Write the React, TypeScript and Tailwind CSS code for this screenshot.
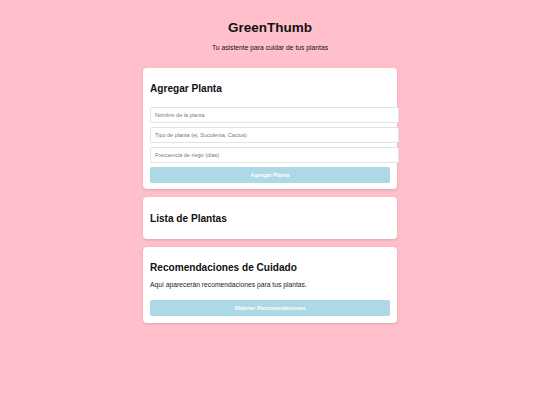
export default function App() {
  return (
    <div className="min-h-screen bg-[#ffc0cb] font-['Liberation_Sans',Arial,sans-serif] text-[#111] pt-[20px]">
      {/* encabezado */}
      <header className="text-center">
        <h1 className="text-[13.5px] leading-[16px] font-bold">GreenThumb</h1>
        <p className="mt-[8px] text-[6.75px] leading-[8px]">Tu asistente para cuidar de tus plantas</p>
      </header>

      <main className="mx-auto mt-[16px] flex w-[254px] flex-col gap-[8px]">
        {/* agregar planta */}
        <section className="rounded-[4px] bg-white px-[7px] pt-[7px] pb-[6px] shadow-[0_1px_3px_rgba(0,0,0,0.15)]">
          <h2 className="mt-[8px] text-[10.1px] leading-[12px] font-bold">Agregar Planta</h2>
          <div className="mt-[12px] flex flex-col gap-[4px]">
            <input
              placeholder="Nombre de la planta"
              className="h-[16px] w-[249px] rounded-[2px] border border-[#e3e3e3] bg-white px-[4px] text-[5.5px] outline-none placeholder:text-[#777]"
            />
            <input
              placeholder="Tipo de planta (ej. Suculenta, Cactus)"
              className="h-[16px] w-[249px] rounded-[2px] border border-[#e3e3e3] bg-white px-[4px] text-[5.5px] outline-none placeholder:text-[#777]"
            />
            <input
              placeholder="Frecuencia de riego (días)"
              className="h-[16px] w-[249px] rounded-[2px] border border-[#e3e3e3] bg-white px-[4px] text-[5.5px] outline-none placeholder:text-[#777]"
            />
            <button className="h-[16px] w-full rounded-[2px] bg-[#add8e6] text-[5.5px] font-bold text-white">
              Agregar Planta
            </button>
          </div>
        </section>

        {/* lista */}
        <section className="rounded-[4px] bg-white px-[7px] pt-[7px] pb-[7px] shadow-[0_1px_3px_rgba(0,0,0,0.15)]">
          <h2 className="mt-[9px] mb-[7px] text-[10.1px] leading-[12px] font-bold">Lista de Plantas</h2>
        </section>

        {/* recomendaciones */}
        <section className="rounded-[4px] bg-white px-[7px] pt-[7px] pb-[6px] shadow-[0_1px_3px_rgba(0,0,0,0.15)]">
          <h2 className="mt-[8px] text-[10.1px] leading-[12px] font-bold">Recomendaciones de Cuidado</h2>
          <p className="mt-[7px] text-[6.75px] leading-[8px] text-[#222]">
            Aquí aparecerán recomendaciones para tus plantas.
          </p>
          <button className="mt-[11px] h-[16px] w-full rounded-[2px] bg-[#add8e6] text-[5.5px] font-bold text-white">
            Obtener Recomendaciones
          </button>
        </section>
      </main>
    </div>
  );
}
